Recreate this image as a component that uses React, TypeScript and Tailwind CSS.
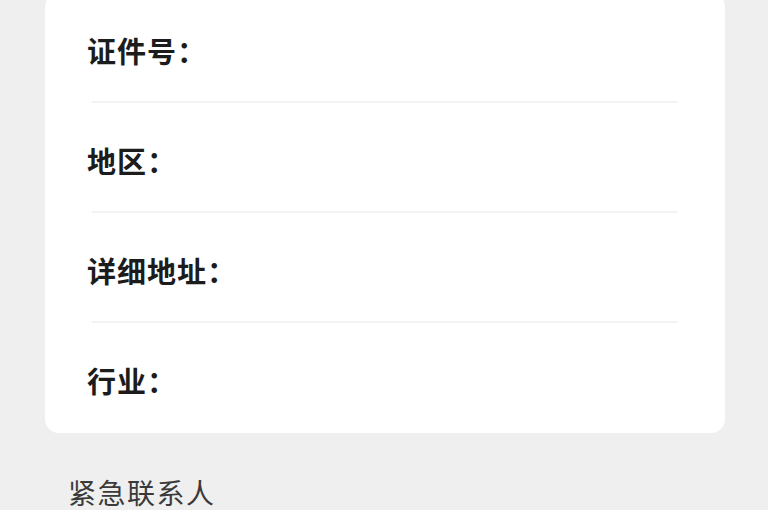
import React from 'react';

const fields = ['证件号：', '地区：', '详细地址：', '行业：'];

const App: React.FC = () => {
  return (
    <div
      className="w-[768px] h-[510px] overflow-hidden bg-[#efefef]"
      style={{ fontFamily: '"Noto Sans CJK SC", "Noto Sans", sans-serif' }}
    >
      {/* Info card */}
      <div className="mx-[45px] mt-[-7px] w-[680px] bg-white rounded-[14px] pb-[2px]">
        {fields.map((label, i) => (
          <div key={label}>
            <div className="h-[108px] flex items-center pl-[42px] pt-[7px]">
              <span className="text-[29px] font-bold text-[#1c1c1c] tracking-[1px]">{label}</span>
            </div>
            {i < fields.length - 1 && <div className="mx-[47px] h-[2px] bg-[#f3f3f3]" />}
          </div>
        ))}
      </div>

      {/* Section title */}
      <div className="pl-[68px] pt-[38px]">
        <span className="text-[28px] text-[#3a3a3a] tracking-[1.5px]">紧急联系人</span>
      </div>
    </div>
  );
};

export default App;
